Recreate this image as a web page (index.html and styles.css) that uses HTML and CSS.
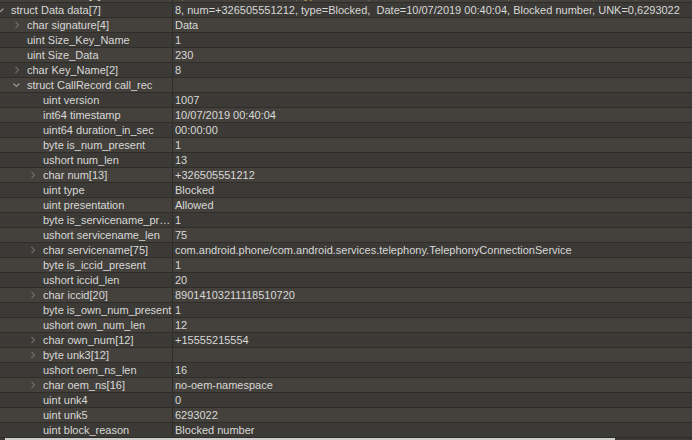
FILE: index.html
```html
<!DOCTYPE html>
<html lang="en">
<head>
    <meta charset="UTF-8">
    <title>Template Results - CallRecord</title>
    <link rel="stylesheet" href="styles.css">
</head>
<body>
    <div class="tree">
        <div class="row lv0 partial">
            <div class="name"><span class="twist"></span><span class="label">struct Data data[6]</span></div>
            <div class="value hot">8, num=+326505551212, type=Blocked,  Date=10/07/2019 00:40:04, Blocked number, UNK=0,6293022</div>
        </div>

        <div class="row lv0">
            <div class="name"><span class="twist"><svg width="16" height="14"><polyline class="open" points="2.5,5.5 5.5,8.5 8.5,5.5"/></svg></span><span class="label">struct Data data[7]</span></div>
            <div class="value">8, num=+326505551212, type=Blocked,  Date=10/07/2019 00:40:04, Blocked number, UNK=0,6293022</div>
        </div>
        <div class="row lv1">
            <div class="name"><span class="twist"><svg width="16" height="14"><polyline class="shut" points="4.5,4 7.5,7 4.5,10"/></svg></span><span class="label">char signature[4]</span></div>
            <div class="value">Data</div>
        </div>
        <div class="row lv1">
            <div class="name"><span class="twist"></span><span class="label">uint Size_Key_Name</span></div>
            <div class="value">1</div>
        </div>
        <div class="row lv1">
            <div class="name"><span class="twist"></span><span class="label">uint Size_Data</span></div>
            <div class="value">230</div>
        </div>
        <div class="row lv1">
            <div class="name"><span class="twist"><svg width="16" height="14"><polyline class="shut" points="4.5,4 7.5,7 4.5,10"/></svg></span><span class="label">char Key_Name[2]</span></div>
            <div class="value">8</div>
        </div>
        <div class="row lv1">
            <div class="name"><span class="twist"><svg width="16" height="14"><polyline class="open" points="2.5,5.5 5.5,8.5 8.5,5.5"/></svg></span><span class="label">struct CallRecord call_rec</span></div>
            <div class="value"></div>
        </div>

        <div class="row lv2">
            <div class="name"><span class="twist"></span><span class="label">uint version</span></div>
            <div class="value">1007</div>
        </div>
        <div class="row lv2">
            <div class="name"><span class="twist"></span><span class="label">int64 timestamp</span></div>
            <div class="value">10/07/2019 00:40:04</div>
        </div>
        <div class="row lv2">
            <div class="name"><span class="twist"></span><span class="label">uint64 duration_in_sec</span></div>
            <div class="value">00:00:00</div>
        </div>
        <div class="row lv2">
            <div class="name"><span class="twist"></span><span class="label">byte is_num_present</span></div>
            <div class="value">1</div>
        </div>
        <div class="row lv2">
            <div class="name"><span class="twist"></span><span class="label">ushort num_len</span></div>
            <div class="value">13</div>
        </div>
        <div class="row lv2">
            <div class="name"><span class="twist"><svg width="16" height="14"><polyline class="shut" points="4.5,4 7.5,7 4.5,10"/></svg></span><span class="label">char num[13]</span></div>
            <div class="value">+326505551212</div>
        </div>
        <div class="row lv2">
            <div class="name"><span class="twist"></span><span class="label">uint type</span></div>
            <div class="value">Blocked</div>
        </div>
        <div class="row lv2">
            <div class="name"><span class="twist"></span><span class="label">uint presentation</span></div>
            <div class="value">Allowed</div>
        </div>
        <div class="row lv2">
            <div class="name"><span class="twist"></span><span class="label">byte is_servicename_present</span></div>
            <div class="value">1</div>
        </div>
        <div class="row lv2">
            <div class="name"><span class="twist"></span><span class="label">ushort servicename_len</span></div>
            <div class="value">75</div>
        </div>
        <div class="row lv2">
            <div class="name"><span class="twist"><svg width="16" height="14"><polyline class="shut" points="4.5,4 7.5,7 4.5,10"/></svg></span><span class="label">char servicename[75]</span></div>
            <div class="value">com.android.phone/com.android.services.telephony.TelephonyConnectionService</div>
        </div>
        <div class="row lv2">
            <div class="name"><span class="twist"></span><span class="label">byte is_iccid_present</span></div>
            <div class="value">1</div>
        </div>
        <div class="row lv2">
            <div class="name"><span class="twist"></span><span class="label">ushort iccid_len</span></div>
            <div class="value">20</div>
        </div>
        <div class="row lv2">
            <div class="name"><span class="twist"><svg width="16" height="14"><polyline class="shut" points="4.5,4 7.5,7 4.5,10"/></svg></span><span class="label">char iccid[20]</span></div>
            <div class="value">89014103211118510720</div>
        </div>
        <div class="row lv2">
            <div class="name"><span class="twist"></span><span class="label">byte is_own_num_present</span></div>
            <div class="value">1</div>
        </div>
        <div class="row lv2">
            <div class="name"><span class="twist"></span><span class="label">ushort own_num_len</span></div>
            <div class="value">12</div>
        </div>
        <div class="row lv2">
            <div class="name"><span class="twist"><svg width="16" height="14"><polyline class="shut" points="4.5,4 7.5,7 4.5,10"/></svg></span><span class="label">char own_num[12]</span></div>
            <div class="value">+15555215554</div>
        </div>
        <div class="row lv2">
            <div class="name"><span class="twist"><svg width="16" height="14"><polyline class="shut" points="4.5,4 7.5,7 4.5,10"/></svg></span><span class="label">byte unk3[12]</span></div>
            <div class="value"></div>
        </div>
        <div class="row lv2">
            <div class="name"><span class="twist"></span><span class="label">ushort oem_ns_len</span></div>
            <div class="value">16</div>
        </div>
        <div class="row lv2">
            <div class="name"><span class="twist"><svg width="16" height="14"><polyline class="shut" points="4.5,4 7.5,7 4.5,10"/></svg></span><span class="label">char oem_ns[16]</span></div>
            <div class="value">no-oem-namespace</div>
        </div>
        <div class="row lv2">
            <div class="name"><span class="twist"></span><span class="label">uint unk4</span></div>
            <div class="value">0</div>
        </div>
        <div class="row lv2">
            <div class="name"><span class="twist"></span><span class="label">uint unk5</span></div>
            <div class="value">6293022</div>
        </div>
        <div class="row lv2">
            <div class="name"><span class="twist"></span><span class="label">uint block_reason</span></div>
            <div class="value">Blocked number</div>
        </div>
    </div>

    <div class="hscroll"><div class="thumb"></div></div>
</body>
</html>
```

FILE: styles.css
```css
html, body {
    margin: 0;
    padding: 0;
    height: 100%;
    overflow: hidden;
}
body {
    font-family: 'Liberation Sans', Arial, sans-serif;
    font-size: 11px;
    color: #d8d8d6;
    background-color: #3c3a36;
}
.tree {
    margin-top: -12px;
}
.row {
    display: flex;
    height: 15px;
    box-sizing: border-box;
    border-bottom: 1px solid #2f2d2a;
    background-color: #3c3a36;
    line-height: 14px;
    white-space: pre;
}
.row:nth-child(odd) {
    background-color: #44413d;
}
.name {
    display: flex;
    box-sizing: border-box;
    width: 173px;
    flex: none;
    overflow: hidden;
    border-right: 1px solid #2f2d2a;
}
.lv0 .twist {
    margin-left: -5px;
}
.lv1 .name {
    padding-left: 11px;
}
.lv2 .name {
    padding-left: 27px;
}
.twist {
    width: 16px;
    height: 14px;
    flex: none;
}
.twist svg {
    display: block;
}
.twist polyline {
    fill: none;
    stroke-width: 1.2;
}
.twist .shut {
    stroke: #6e6b67;
}
.twist .open {
    stroke: #9a9793;
}
.label {
    flex: 1;
    min-width: 0;
    overflow: hidden;
    text-overflow: ellipsis;
}
.value {
    flex: 1;
    min-width: 0;
    overflow: hidden;
    padding-left: 2px;
}
.hot {
    color: #d9a15c;
}
.hscroll {
    height: 2px;
    background-color: #3c3a36;
}
.thumb {
    margin-left: 5px;
    width: 610px;
    height: 2px;
    background-color: #cfcfcd;
}
```
